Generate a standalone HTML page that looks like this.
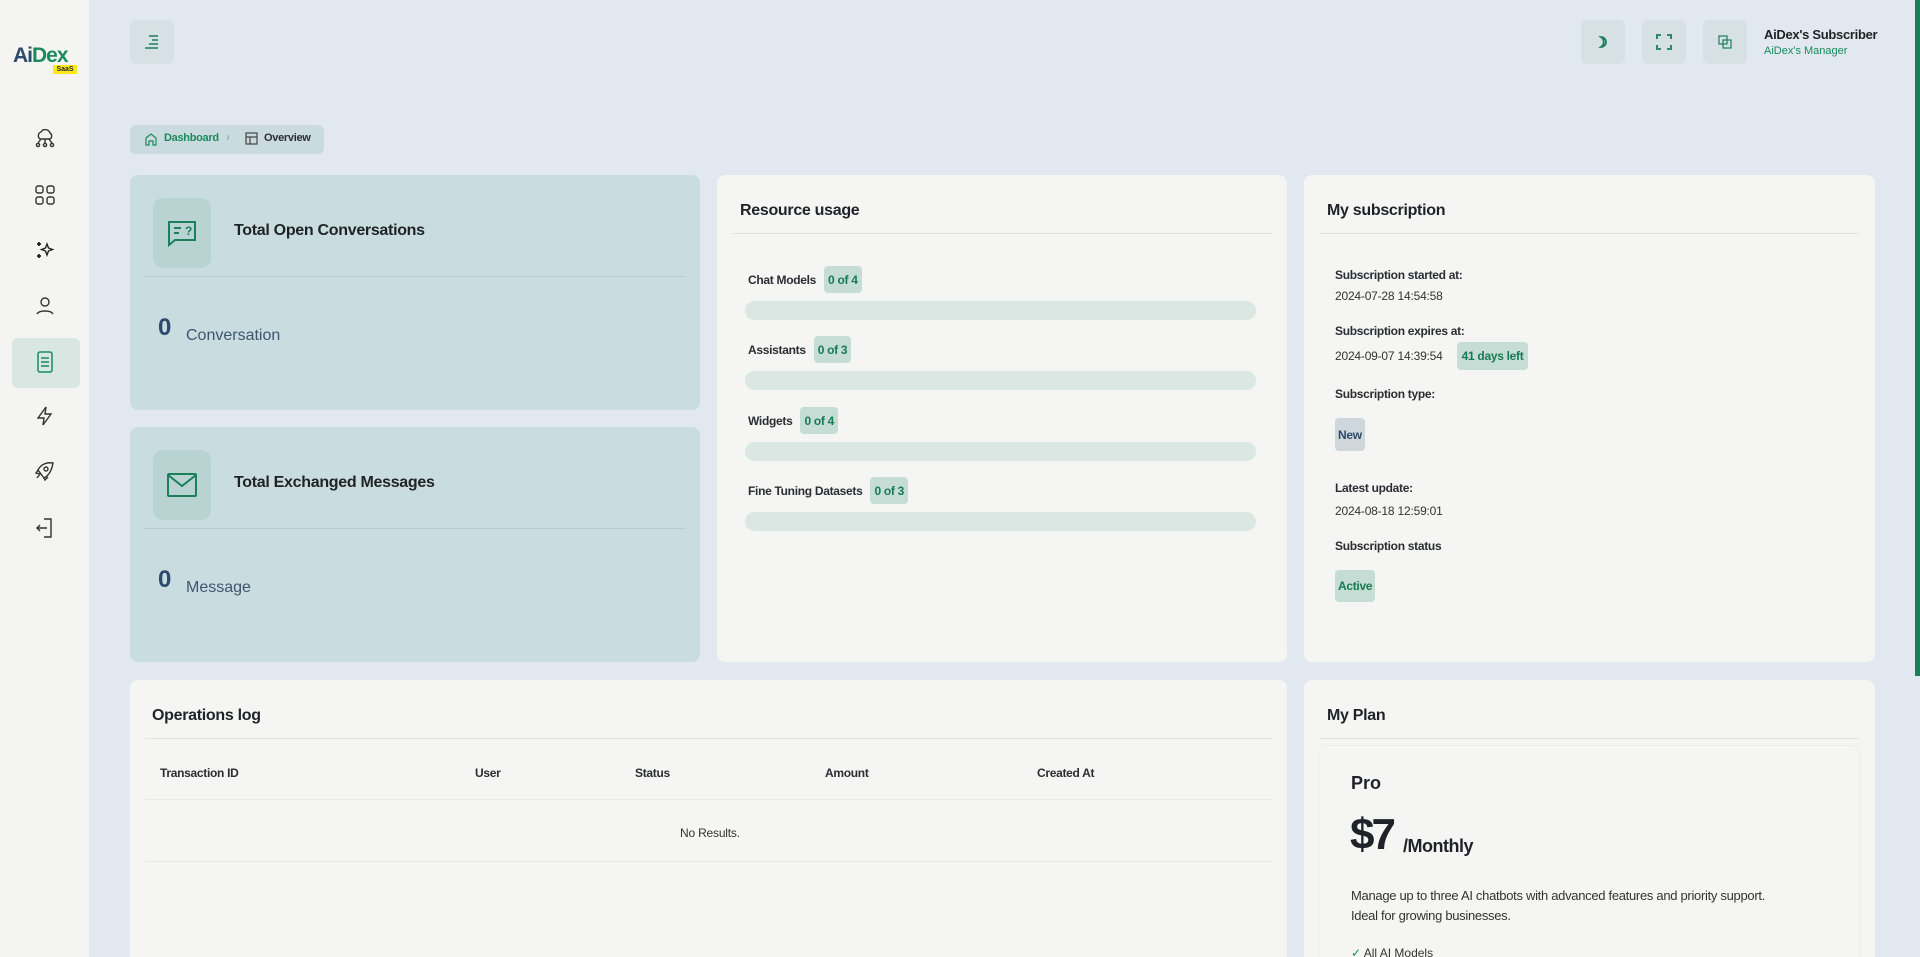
<!DOCTYPE html>
<html><head><meta charset="utf-8"><style>
*{box-sizing:border-box;margin:0;padding:0}
html,body{width:1920px;height:957px;overflow:hidden}
body{background:#e1e8ef;font-family:"Liberation Sans",sans-serif;color:#1f2329;position:relative}
.abs{position:absolute}
.side{left:0;top:0;width:90px;height:957px;background:#f4f4f2;border-right:1px solid #e3e6e8}
.ib{position:absolute;left:0;width:90px;display:flex;justify-content:center}
.btn{position:absolute;width:44px;height:44px;background:#d6e0e5;border-radius:6px;display:flex;align-items:center;justify-content:center}
.card{position:absolute;background:#f5f5f3;border-radius:8px;overflow:hidden}
.tcard{position:absolute;background:#c9dcdf;border-radius:8px}
.h{position:absolute;font-size:16px;font-weight:bold;color:#1f2329;letter-spacing:-0.3px}
.div{position:absolute;height:1px;background:#dfe3e3}
.lbl{font-size:12px;font-weight:bold;color:#2a2e33;letter-spacing:-0.3px;white-space:nowrap}
.val{position:absolute;font-size:12px;color:#333;letter-spacing:-0.2px;white-space:nowrap}
.badge{background:#c6ddd6;color:#167a56;font-size:12px;font-weight:bold;border-radius:4px;display:flex;align-items:center;justify-content:center;white-space:nowrap;letter-spacing:-0.3px;padding:0 4px}
.row{position:absolute;left:31px;display:flex;align-items:center;gap:8px}
.bar{position:absolute;left:28px;right:31px;height:19px;border-radius:10px;background:#dbe7e2}
svg{display:block}
</style></head><body>
<div class="abs side">
  <div class="abs" style="left:13px;top:44px;font-size:21px;font-weight:bold;letter-spacing:-1px"><span style="color:#2d4a6b">Ai</span><span style="color:#1b8a5c">Dex</span></div>
  <div class="abs" style="left:53px;top:65px;width:24px;height:9px;background:#ffe81a;font-size:7px;font-weight:bold;line-height:9px;text-align:center;color:#1f2329">SaaS</div>
  <div class="ib" style="top:128px"><svg width="22" height="20" viewBox="0 0 22 20" fill="none" stroke="#333" stroke-width="1.4"><path d="M6 11a4 4 0 0 1 1-7 5 5 0 0 1 9 1 3.5 3.5 0 0 1 0 6z"/><path d="M11 11v4M7 11l-3 4M15 11l3 4"/><circle cx="4" cy="17" r="1.6"/><circle cx="11" cy="17" r="1.6"/><circle cx="18" cy="17" r="1.6"/></svg></div>
  <div class="ib" style="top:185px"><svg width="20" height="20" viewBox="0 0 20 20" fill="none" stroke="#333" stroke-width="1.4"><rect x="1" y="1" width="7" height="7" rx="2"/><rect x="12" y="1" width="7" height="7" rx="2"/><rect x="1" y="12" width="7" height="7" rx="2"/><rect x="12" y="12" width="7" height="7" rx="2"/></svg></div>
  <div class="ib" style="top:240px"><svg width="20" height="20" viewBox="0 0 20 20" fill="none" stroke="#222" stroke-width="1.4"><path d="M12 4l1.5 4 4 1.5-4 1.5L12 15l-1.5-4-4-1.5 4-1.5z"/><path d="M4 2v4M2 4h4M4 14v4M2 16h4" stroke-width="1.8"/></svg></div>
  <div class="ib" style="top:296px"><svg width="20" height="20" viewBox="0 0 20 20" fill="none" stroke="#333" stroke-width="1.4"><circle cx="10" cy="6" r="4"/><path d="M2 18c2-4 14-4 16 0"/></svg></div>
  <div class="abs" style="left:12px;top:338px;width:68px;height:50px;background:#d8e7e2;border-radius:6px"></div>
  <div class="ib" style="top:351px"><svg width="18" height="22" viewBox="0 0 18 22" fill="none" stroke="#1b8a5c" stroke-width="1.5"><rect x="2" y="1" width="14" height="20" rx="2"/><path d="M5 7h8M5 11h8M5 15h8"/></svg></div>
  <div class="ib" style="top:406px"><svg width="20" height="20" viewBox="0 0 20 20" fill="none" stroke="#333" stroke-width="1.4"><path d="M11 1L3 12h6l-1 7 8-11h-6z"/></svg></div>
  <div class="ib" style="top:461px"><svg width="22" height="20" viewBox="0 0 22 20" fill="none" stroke="#333" stroke-width="1.4"><path d="M4 9c3-6 9-8 15-7-1 6-3 12-9 15z"/><circle cx="12" cy="8" r="2"/><path d="M4 9l-2 3 4 1M10 17l1 2 3-3M6 13l-3 4"/></svg></div>
  <div class="ib" style="top:517px"><svg width="18" height="22" viewBox="0 0 18 22" fill="none" stroke="#333" stroke-width="1.4"><path d="M8 2h7v18H8M1 11h10M4 8l-3 3 3 3"/></svg></div>
</div>

<div class="btn" style="left:130px;top:20px"><svg width="16" height="14" viewBox="0 0 16 14" stroke="#1b7f5a" stroke-width="1.6"><path d="M5 1h9M8 5h6M5 9h9M1 13h13"/></svg></div>
<div class="btn" style="left:1581px;top:20px"><svg width="14" height="14" viewBox="0 0 14 14" fill="none" stroke="#1b7f5a" stroke-width="1.8"><path d="M5 2a6 6 0 0 1 0 10 5 5 0 0 0 0-10z"/></svg></div>
<div class="btn" style="left:1642px;top:20px"><svg width="16" height="16" viewBox="0 0 16 16" fill="none" stroke="#1b7f5a" stroke-width="1.8"><path d="M1 5V1h4M11 1h4v4M15 11v4h-4M5 15H1v-4"/></svg></div>
<div class="btn" style="left:1703px;top:20px"><svg width="14" height="14" viewBox="0 0 14 14" fill="none" stroke="#1b7f5a" stroke-width="1.2"><rect x="1" y="1" width="8" height="8"/><rect x="5" y="5" width="8" height="8"/></svg></div>
<div class="abs" style="left:1764px;top:27px;font-size:13px;font-weight:bold;color:#1f2329;letter-spacing:-0.3px">AiDex's Subscriber</div>
<div class="abs" style="left:1764px;top:45px;font-size:11px;color:#1b8a5c">AiDex's Manager</div>
<div class="abs" style="left:1915px;top:0;width:5px;height:676px;background:#1b7f5a"></div>

<div class="abs" style="left:130px;top:125px;width:194px;height:29px;background:#c9dbdf;border-radius:6px"></div>
<div class="abs" style="left:144px;top:132px"><svg width="14" height="14" viewBox="0 0 14 14" fill="none" stroke="#1b8a5c" stroke-width="1.2"><path d="M2 6l5-4 5 4v7H9V9H5v4H2z"/></svg></div>
<div class="abs" style="left:164px;top:132px;font-size:11px;font-weight:bold;color:#1b8a5c;letter-spacing:-0.3px">Dashboard</div>
<div class="abs" style="left:226px;top:130px;font-size:12px;color:#7aa">›</div>
<div class="abs" style="left:245px;top:132px"><svg width="13" height="13" viewBox="0 0 13 13" fill="none" stroke="#444" stroke-width="1.2"><rect x="1" y="1" width="11" height="11"/><path d="M1 5h11M5 5v7"/></svg></div>
<div class="abs" style="left:264px;top:132px;font-size:11px;font-weight:bold;color:#2a2e33;letter-spacing:-0.3px">Overview</div>

<div class="tcard" style="left:130px;top:175px;width:570px;height:235px">
  <div class="abs" style="left:23px;top:23px;width:58px;height:70px;background:#b9d3d3;border-radius:10px;display:flex;align-items:center;justify-content:center"><svg width="32" height="28" viewBox="0 0 32 28" fill="none" stroke="#1b7f5a" stroke-width="2"><path d="M3 3h26v18H9l-6 5z"/><path d="M8 9h7M8 14h5"/><text x="19" y="16" font-size="12" font-weight="bold" fill="#1b7f5a" stroke="none" font-family="Liberation Sans">?</text></svg></div>
  <div class="h" style="left:104px;top:47px">Total Open Conversations</div>
  <div class="div" style="left:14px;top:101px;width:542px;background:#b5cdd0"></div>
  <div class="abs" style="left:28px;top:139px;font-size:24px;font-weight:900;color:#2d4a6b">0</div>
  <div class="abs" style="left:56px;top:152px;font-size:16px;color:#3d5670">Conversation</div>
</div>
<div class="tcard" style="left:130px;top:427px;width:570px;height:235px">
  <div class="abs" style="left:23px;top:23px;width:58px;height:70px;background:#b9d3d3;border-radius:10px;display:flex;align-items:center;justify-content:center"><svg width="32" height="26" viewBox="0 0 32 26" fill="none" stroke="#1b7f5a" stroke-width="2"><rect x="2" y="2" width="28" height="22" rx="1"/><path d="M2 3l14 11 14-11"/></svg></div>
  <div class="h" style="left:104px;top:47px">Total Exchanged Messages</div>
  <div class="div" style="left:14px;top:101px;width:542px;background:#b5cdd0"></div>
  <div class="abs" style="left:28px;top:139px;font-size:24px;font-weight:900;color:#2d4a6b">0</div>
  <div class="abs" style="left:56px;top:152px;font-size:16px;color:#3d5670">Message</div>
</div>

<div class="card" style="left:717px;top:175px;width:570px;height:487px">
  <div class="h" style="left:23px;top:27px">Resource usage</div>
  <div class="div" style="left:15px;right:15px;top:58px"></div>
  <div class="row" style="top:91px"><span class="lbl">Chat Models</span><span class="badge" style="height:27px">0 of 4</span></div><div class="bar" style="top:126px"></div>
  <div class="row" style="top:161px"><span class="lbl">Assistants</span><span class="badge" style="height:27px">0 of 3</span></div><div class="bar" style="top:196px"></div>
  <div class="row" style="top:232px"><span class="lbl">Widgets</span><span class="badge" style="height:27px">0 of 4</span></div><div class="bar" style="top:267px"></div>
  <div class="row" style="top:302px"><span class="lbl">Fine Tuning Datasets</span><span class="badge" style="height:27px">0 of 3</span></div><div class="bar" style="top:337px"></div>
</div>

<div class="card" style="left:1304px;top:175px;width:571px;height:487px">
  <div class="h" style="left:23px;top:27px">My subscription</div>
  <div class="div" style="left:16px;right:16px;top:58px"></div>
  <div class="row" style="top:93px"><span class="lbl">Subscription started at:</span></div>
  <div class="val" style="left:31px;top:114px">2024-07-28 14:54:58</div>
  <div class="row" style="top:149px"><span class="lbl">Subscription expires at:</span></div>
  <div class="row" style="top:167px;gap:14px"><span class="val" style="position:static">2024-09-07 14:39:54</span><span class="badge" style="height:28px;padding:0 5px">41 days left</span></div>
  <div class="row" style="top:212px"><span class="lbl">Subscription type:</span></div>
  <div class="row" style="top:243px"><span class="badge" style="height:33px;background:#cfd7dc;color:#2d4a6b;padding:0 3px">New</span></div>
  <div class="row" style="top:306px"><span class="lbl">Latest update:</span></div>
  <div class="val" style="left:31px;top:329px">2024-08-18 12:59:01</div>
  <div class="row" style="top:364px"><span class="lbl">Subscription status</span></div>
  <div class="row" style="top:395px"><span class="badge" style="height:32px;padding:0 3px">Active</span></div>
</div>

<div class="card" style="left:130px;top:680px;width:1157px;height:277px;border-radius:8px 8px 0 0">
  <div class="h" style="left:22px;top:27px">Operations log</div>
  <div class="div" style="left:15px;right:15px;top:58px"></div>
  <div class="lbl abs" style="left:30px;top:86px">Transaction ID</div>
  <div class="lbl abs" style="left:345px;top:86px">User</div>
  <div class="lbl abs" style="left:505px;top:86px">Status</div>
  <div class="lbl abs" style="left:695px;top:86px">Amount</div>
  <div class="lbl abs" style="left:907px;top:86px">Created At</div>
  <div class="div" style="left:15px;right:15px;top:119px;background:#e8eaea"></div>
  <div class="val" style="left:550px;top:146px">No Results.</div>
  <div class="div" style="left:15px;right:15px;top:181px;background:#e5e8e8"></div>
</div>

<div class="card" style="left:1304px;top:680px;width:571px;height:277px;border-radius:8px 8px 0 0">
  <div class="h" style="left:23px;top:27px">My Plan</div>
  <div class="div" style="left:16px;right:16px;top:58px"></div>
  <div class="abs" style="left:14px;top:65px;width:542px;height:212px;border:1px solid #eceeed;border-bottom:none;border-radius:8px 8px 0 0"></div>
  <div class="abs" style="left:47px;top:93px;font-size:18px;font-weight:bold">Pro</div>
  <div class="abs" style="left:46px;top:133px;font-size:44px;font-weight:900;letter-spacing:-3px;line-height:44px">$7</div>
  <div class="abs" style="left:99px;top:156px;font-size:18px;font-weight:bold;letter-spacing:-0.5px">/Monthly</div>
  <div class="abs" style="left:47px;top:206px;font-size:13px;line-height:20px;color:#333;letter-spacing:-0.3px">Manage up to three AI chatbots with advanced features and priority support.<br>Ideal for growing businesses.</div>
  <div class="abs" style="left:47px;top:266px;font-size:12px;line-height:14px;color:#333"><span style="color:#1b8a5c">✓</span> All AI Models</div>
</div>
</body></html>
